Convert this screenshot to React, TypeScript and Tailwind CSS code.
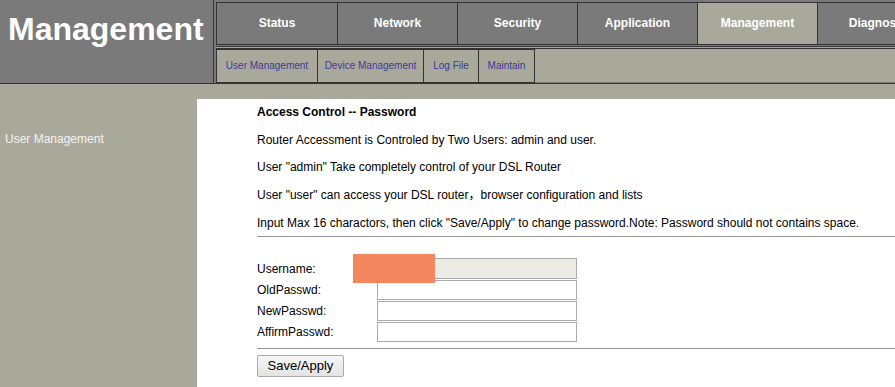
import React from 'react';

const tabs = ['Status', 'Network', 'Security', 'Application', 'Management', 'Diagnosis'];
const subTabs = [
  { label: 'User Management', w: 'w-[100px]' },
  { label: 'Device Management', w: 'w-[106px]' },
  { label: 'Log File', w: 'w-[55px]' },
  { label: 'Maintain', w: 'w-[56px]' },
];

const App: React.FC = () => {
  return (
    <div className="w-[895px] h-[387px] overflow-hidden bg-[#a9a99b] font-['Liberation_Sans',Arial,'Noto_Sans_CJK_SC',sans-serif] text-[12px] text-black">
      {/* Header */}
      <div className="flex h-[84px] bg-[#7a7a7a] border-b border-[#333]">
        <div className="w-[213px] shrink-0 pl-[8px] pt-[9px]">
          <h1 className="text-[32px] font-bold text-white leading-[40px]">Management</h1>
        </div>
        <div className="flex-1 flex flex-col border-l border-[#333] pl-[2px] pt-[2px]">
          {/* main tabs */}
          <div className="flex h-[43px] border border-[#333] border-r-0 w-[800px]">
            {tabs.map((t, i) => (
              <div
                key={t}
                className={`w-[120px] shrink-0 flex items-center justify-center pb-[1px] font-bold text-white text-[12px] ${
                  i > 0 ? 'border-l border-[#333]' : ''
                } ${t === 'Management' ? 'bg-[#a9a99b]' : ''}`}
              >
                {t}
              </div>
            ))}
          </div>
          {/* sub tabs */}
          <div className="mt-[1px] h-[36px] border-t-[3px] border-double border-[#333] bg-[#a9a99b] flex">
            <div className="flex h-[34px] border border-[#333]">
              {subTabs.map((s, i) => (
                <div
                  key={s.label}
                  className={`${s.w} flex items-center justify-center pb-[1px] text-[10px] text-[#3b3b9a] ${
                    i > 0 ? 'border-l border-[#333]' : ''
                  }`}
                >
                  {s.label}
                </div>
              ))}
            </div>
          </div>
        </div>
      </div>

      {/* Body */}
      <div className="flex h-[303px]">
        <div className="w-[197px] shrink-0 pt-[46px] pl-[5px] text-[#f4f4f4] text-[12px]">User Management</div>
        <div className="flex-1 mt-[15px] bg-white pl-[60px] pt-[6px]">
          <div className="font-bold leading-[15px]">Access Control -- Password</div>
          <div className="mt-[13px] leading-[15px]">Router Accessment is Controled by Two Users: admin and user.</div>
          <div className="mt-[12px] leading-[15px]">User "admin" Take completely control of your DSL Router</div>
          <div className="mt-[13px] leading-[15px]">User "user" can access your DSL router，browser configuration and lists</div>
          <div className="mt-[13px] leading-[15px]">
            Input Max 16 charactors, then click "Save/Apply" to change password.Note: Password should not contains space.
          </div>
          <div className="mt-[5px] h-px bg-[#999]" />

          <div className="mt-[21px] flex flex-col gap-[1px]">
            <div className="flex items-center h-[21px]">
              <span className="w-[120px]">Username:</span>
              <div className="relative">
                <input
                  disabled
                  className="w-[200px] h-[21px] border border-[#aaa] bg-[#ebebe4]"
                />
                <div className="absolute left-[-24px] top-[-4px] w-[82px] h-[29px] bg-[#f4865f]" />
              </div>
            </div>
            {['OldPasswd:', 'NewPasswd:', 'AffirmPasswd:'].map((l) => (
              <div key={l} className="flex items-center h-[20px]">
                <span className="w-[120px]">{l}</span>
                <input type="password" className="w-[200px] h-[20px] border border-[#aaa] bg-white" />
              </div>
            ))}
          </div>
          <div className="mt-[6px] h-px bg-[#999]" />
          <button className="mt-[6px] w-[87px] h-[22px] border border-[#aaa] rounded-[2px] bg-gradient-to-b from-[#f6f6f6] to-[#e3e3e3] text-[13px] text-black">
            Save/Apply
          </button>
        </div>
      </div>
    </div>
  );
};

export default App;
